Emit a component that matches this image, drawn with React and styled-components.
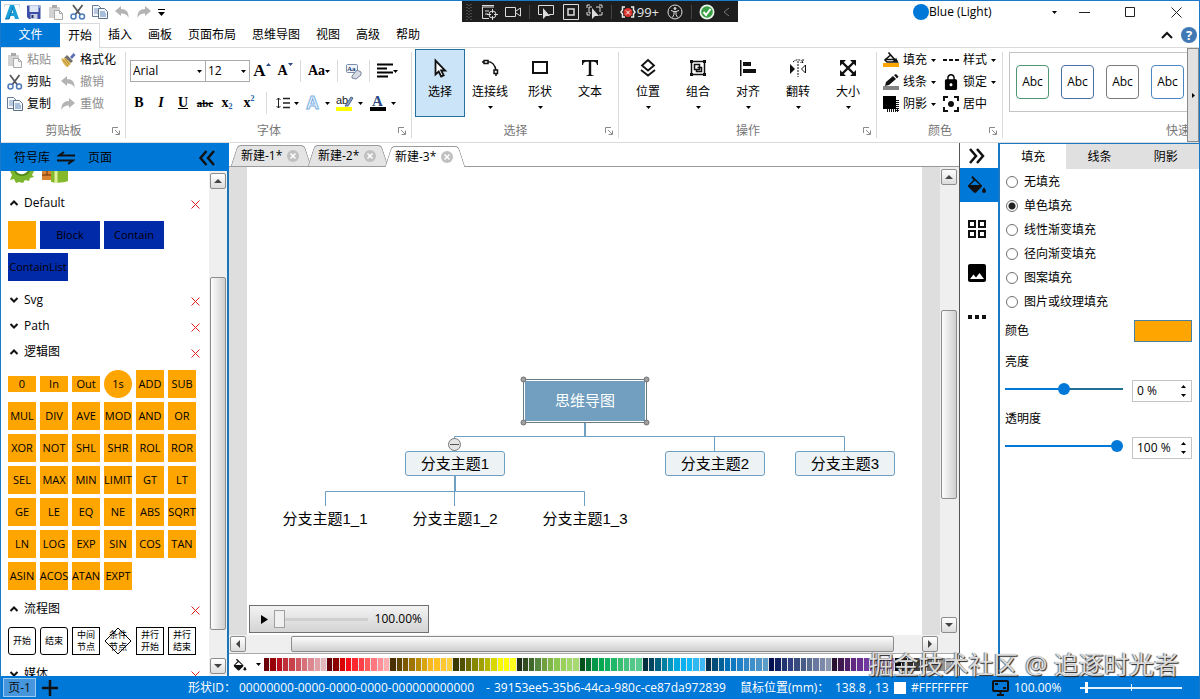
import React, { useState } from 'react'
import styled, { createGlobalStyle, css } from 'styled-components'
import { MdLock, MdImage } from 'react-icons/md'

const BLUE = '#0078d7'

const GlobalStyle = createGlobalStyle`
    * { box-sizing: border-box; }

    body {
        margin: 0;
        font-family: "Open Sans", "Noto Sans CJK SC", sans-serif;
        font-size: 12px;
        line-height: 16px;
        color: #000;
        overflow: hidden;
    }

    button, input, select {
        font: inherit;
        color: inherit;
    }

    button {
        background: none;
        border: 0;
        padding: 0;
        white-space: nowrap;
    }

    svg { display: block; flex: none; }
`

/* ---------- icons ---------- */

const Svg = ({ w = 16, h = w, box, children, ...rest }) => (
    <svg width={w} height={h} viewBox={box || `0 0 ${w} ${h}`} fill="none" aria-hidden="true" {...rest}>{children}</svg>
)

const Caret = ({ color = '#000' }) => (
    <Svg w={5} h={3}><path d="M0 0h5L2.5 3z" fill={color} /></Svg>
)

const LogoIcon = () => (
    <Svg>
        <path d="M1 15 6 1h4l5 14h-4l-1-3H6.200l-1 3zM7 9h2.200L8 5z" fill="#1ba1d8" />
        <path d="M1 15h4l4-12" stroke="#0c6fb0" />
        <path d="M.5 3V.5h15V3" stroke="#c8dcea" />
    </Svg>
)

const SaveIcon = () => (
    <Svg>
        <path d="M1 1.500h13.500V15H3L1 13z" fill="#3b4fa8" />
        <path d="M3.500 1.500h9V8h-9z" fill="#dfe6f5" />
        <path d="M4.500 10h7v5h-7z" fill="#c9cfe4" />
        <path d="M5.500 11h2v3h-2z" fill="#222c66" />
        <path d="M12 2h2v2h-2z" fill="#8ea0dd" />
    </Svg>
)

const PasteIcon = () => (
    <Svg>
        <path d="M1 3h11v11H1z" fill="#d2d2d2" />
        <path d="M4 1h5v3H4z" fill="#aaa" />
        <path d="M6.500 6.500h5l3 3v6h-8z" fill="#f7f7f7" stroke="#a9a9a9" />
        <path d="M11.500 6.500v3h3" stroke="#a9a9a9" />
    </Svg>
)

const CutIcon = () => (
    <Svg>
        <path d="M3 1l7.500 10M12.500 1 5 11" stroke="#55585c" strokeWidth="1.800" />
        <circle cx="3.500" cy="12.500" r="2.500" stroke="#4d7cb8" strokeWidth="1.500" />
        <circle cx="12" cy="12.500" r="2.500" stroke="#4d7cb8" strokeWidth="1.500" />
    </Svg>
)

const CopyIcon = () => (
    <Svg>
        <path d="M.5 1.500h6l3 3v8h-9z" fill="#f4f7fb" stroke="#6a7c93" />
        <path d="M2 5h5M2 7h5M2 9h5" stroke="#7d9cc4" />
        <path d="M6.500 4.500h6l3 3v7h-9z" fill="#f4f7fb" stroke="#5b6e88" />
        <path d="M8 8h5M8 10h6M8 12h6" stroke="#5d86bb" />
    </Svg>
)

const UndoIcon = ({ flip }) => (
    <Svg>
        <path
            transform={flip ? 'matrix(-1 0 0 1 16 0)' : undefined}
            d="M1 7l6-5v3c5 0 8 3 7.500 9-1.500-3.500-4-4.500-7.500-4.500V12z"
            fill="#b4b4b4"
        />
    </Svg>
)

const BrushIcon = () => (
    <Svg>
        <path d="M10 5l3.500-4 2 2L12 7z" fill="#5d6fb5" />
        <path d="M7 3l6 6-2 2-7-5z" fill="#6f6f6f" />
        <path d="M1 6c2 1 3 0 4.500 0L11 11c-1 2-3 3.500-4 4.500C4 13 2 10 1 6z" fill="#e2bd62" />
        <path d="M3 8l5 6M5 7l4.500 5.500" stroke="#b58a2c" />
    </Svg>
)

const LauncherIcon = () => (
    <Svg w={8}>
        <path d="M.5 6V.5H6M3 3l4 4M7.500 3.500v4h-4" stroke="#8a8a8a" />
    </Svg>
)

const ClearIcon = () => (
    <Svg w={17} h={17}>
        <rect x="1.500" y="1.500" width="11" height="8" rx="1" fill="#eef2f9" stroke="#7d8cab" />
        <text x="2" y="8" fontSize="7" fontFamily="Liberation Serif, serif" fontWeight="700" fill="#223a70">Aa</text>
        <path d="M7 13l5-6 4 2v3l-5 4-4-1z" fill="#d6dbe6" stroke="#7a8398" />
    </Svg>
)

const AlignTextIcon = () => (
    <Svg><path d="M0 1.500h16M0 5.500h10M0 9.500h16M0 13.500h11" stroke="#000" strokeWidth="2" /></Svg>
)

const SpacingIcon = () => (
    <Svg w={14} h={12}>
        <path d="M2.500 1v10M.5 3l2-2 2 2M.5 9l2 2 2-2" stroke="#222" />
        <path d="M7 1.500h7M7 6h7M7 10.500h7" stroke="#222" strokeWidth="1.500" />
    </Svg>
)

const CursorIcon = () => (
    <Svg w={20}><path d="M5.500 2.500v14l3.200-3 2.500 5 2.500-1.200-2.500-4.800h4z" stroke="#111" strokeWidth="1.800" fill="#fff" /></Svg>
)

const LinkIcon = () => (
    <Svg w={20}>
        <path d="M5 4c7-1 10 2 11 9M2 4h4" stroke="#111" strokeWidth="1.600" />
        <rect x="4" y="2.500" width="4" height="3" fill="#fff" stroke="#111" strokeWidth="1.500" />
        <rect x="14" y="12" width="3.500" height="3.500" fill="#fff" stroke="#111" strokeWidth="1.500" />
        <path d="M16 15v3" stroke="#111" strokeWidth="1.500" />
    </Svg>
)

const RectIcon = () => (
    <Svg w={20}><path d="M3 4h14v11H3z" stroke="#111" strokeWidth="2" /></Svg>
)

const TextIcon = () => (
    <Svg w={20}><path d="M2 2h16v5h-1c-.4-2.200-1.200-3.200-3.500-3.200h-2.300V16c0 1 .6 1.200 2.300 1.300V18h-7v-.7c1.700-.1 2.300-.3 2.300-1.300V3.800H6.500C4.200 3.800 3.400 4.800 3 7H2z" fill="#111" /></Svg>
)

const LayerIcon = () => (
    <Svg w={20}><path d="M10 2l6 5.500-6 5-6-5zM3 12l7 5.500 7-5.500" stroke="#111" strokeWidth="1.800" /></Svg>
)

const GroupIcon = () => (
    <Svg w={20}>
        <path d="M3.500 3.500h13v13h-13z" stroke="#111" strokeWidth="1.500" />
        <path d="M6.500 6.500h5v5h-5zM9.500 9.500h4v4h-5v-2" stroke="#111" strokeWidth="1.500" />
        <path d="M2 2h3v3H2zM15 2h3v3h-3zM2 15h3v3H2zM15 15h3v3h-3z" fill="#111" />
    </Svg>
)

const AlignIcon = () => (
    <Svg w={20}><path d="M2 2h1.500v16H2zM5 4h8v4H5zM5 11h13v4H5z" fill="#111" /></Svg>
)

const FlipIcon = () => (
    <Svg w={20}>
        <path d="M2 6v10l5-5z" fill="#111" />
        <path d="M17.500 7v8l-4-4z" stroke="#111" />
        <path d="M10 3v16" stroke="#111" strokeDasharray="2 1" />
        <path d="M5 4c3-3 7-3 10 0M15 1v3.500h-3" stroke="#111" strokeDasharray="2 1" />
    </Svg>
)

const SizeIcon = () => (
    <Svg w={20}>
        <path d="M4 4l12 12M16 4L4 16" stroke="#111" strokeWidth="2.400" />
        <path d="M2 2h6L2 8zM18 2v6l-6-6zM2 18v-6l6 6zM18 18h-6l6-6z" fill="#111" />
    </Svg>
)

const BUCKET = 'M16.56 8.94L7.62 0 6.21 1.41l2.380 2.380-5.150 5.150c-.59.59-.59 1.540 0 2.120l5.500 5.500c.29.29.68.44 1.060.44s.77-.15 1.060-.44l5.500-5.500c.59-.58.59-1.530 0-2.120z'

const BucketIcon = ({ size = 20 }) => (
    <Svg w={size} box="2 -1 20 20">
        <path fillRule="evenodd" d={`${BUCKET}M5.210 9L10 4.600 14.790 9z`} fill="#111" />
        <path d="M19 11.500s-2 2.170-2 3.500a2 2 0 0 0 4 0c0-1.330-2-3.500-2-3.500z" fill="#111" />
    </Svg>
)

const FillIcon = () => (
    <Svg>
        <path d="M5.500.5l6.500 7.500-2 2H4L2 8l5-4.500" stroke="#111" strokeWidth="1.600" />
        <path d="M2 7.500h10M13 7l1.500 3h-3z" stroke="#111" strokeWidth="1.400" />
        <path d="M0 11h16v4H0z" fill="orange" />
    </Svg>
)

const PenIcon = () => (
    <Svg>
        <path d="M2 12l1-4 7-6 3 3-7 6zM11 1l2-1 2.500 2.500-1.500 2z" fill="#111" />
        <path d="M0 12h16v4H0z" fill="#848484" />
    </Svg>
)

const ShadowIcon = () => (
    <Svg>
        <path d="M4 14.500h12M14.500 4v12" stroke="#111" strokeWidth="3" strokeDasharray="1 1" />
        <path d="M0 0h13v13H0z" fill="#000" />
    </Svg>
)

const DashIcon = () => (
    <Svg><path d="M0 8h4M6 8h4M12 8h4" stroke="#111" strokeWidth="2" /></Svg>
)

const CenterIcon = () => (
    <Svg>
        <path d="M1 5V1h4M11 1h4v4M15 11v4h-4M5 15H1v-4" stroke="#111" strokeWidth="2" />
        <circle cx="8" cy="8" r="3" fill="#111" />
    </Svg>
)

const Chevron = ({ up }) => (
    <Svg w={10} h={8}><path d={up ? 'M1.500 6L5 2.500 8.500 6' : 'M1.500 2L5 5.500 8.500 2'} stroke="#111" strokeWidth="2" /></Svg>
)

const CrossIcon = () => (
    <Svg w={9}><path d="M.5.5l8 8M8.500.5l-8 8" stroke="#e02020" /></Svg>
)

const DoubleChevron = ({ right }) => (
    <Svg w={18} h={18}>
        <path d={right ? 'M2 2l6 7-6 7M9 2l6 7-6 7' : 'M8.500 2l-6 7 6 7M16 2l-6 7 6 7'} stroke="#111" strokeWidth="2.500" />
    </Svg>
)

const SwapIcon = () => (
    <Svg w={18} h={14}><path d="M18 4.500H2L7 1M0 9.500h16L11 13" stroke="#111" strokeWidth="2" /></Svg>
)

const GridIcon = () => (
    <Svg w={20}><path d="M2 2h6v6H2zM12 2h6v6h-6zM2 12h6v6H2zM12 12h6v6h-6z" stroke="#111" strokeWidth="2" /></Svg>
)

const DotsIcon = () => (
    <Svg w={20}><path d="M1 8h4v4H1zM8 8h4v4H8zM15 8h4v4h-4z" fill="#111" /></Svg>
)

const MonitorIcon = () => (
    <Svg w={17} h={16}>
        <rect x="1" y="1" width="15" height="10" rx="1" stroke="#111" strokeWidth="2" />
        <path d="M4 5V4h2M13 7v1h-2M5 15h7M8.500 11v4" stroke="#111" strokeWidth="2" />
    </Svg>
)

const ScrollArrow = ({ d }) => <Svg w={8}><path d={d} fill="#444" /></Svg>

/* ---------- window frame ---------- */

const Window = styled.div`
    height: 100vh;
    min-height: 560px;
    display: flex;
    flex-direction: column;
    border: 1px solid #1979ca;
    border-bottom: 0;
    background: #fff;
    position: relative;
    overflow: hidden;
`

const TitleBar = styled.header`
    display: flex;
    align-items: center;
    height: 22px;
    padding-left: 3px;
`

const QuickTools = styled.div`
    display: flex;
    align-items: center;
    gap: 6px;
    flex: 1;
`

const ThemePicker = styled.button`
    display: flex;
    align-items: center;
    width: 144px;
    font-size: 12px;

    i {
        width: 16px;
        height: 16px;
        border-radius: 50%;
        background: ${BLUE};
    }

    svg { margin-left: auto; }
`

const WindowButton = styled.button`
    display: flex;
    justify-content: center;
    width: 46px;
    color: #222;
`

const WindowButtons = styled.div`
    display: flex;
    margin-left: 4px;
`

const Recorder = styled.div`
    position: absolute;
    top: 0;
    left: 50%;
    transform: translateX(-50%);
    display: flex;
    align-items: center;
    justify-content: space-between;
    width: 276px;
    height: 21px;
    padding: 0 8px 0 4px;
    background: #1e1e1e;
    color: #e6e6e6;
    font-size: 13px;

    span { display: flex; align-items: center; gap: 1px; }
    i { width: 1px; height: 14px; background: #444; }
`

/* ---------- ribbon ---------- */

const TabRow = styled.nav`
    display: flex;
    height: 24px;
`

const RibbonTab = styled.button`
    padding: 0 8px;
    position: relative;

    ${p => p.$active && css`
        background: #fff;
        border: solid #dadada;
        border-width: 1px 1px 0 0;
        padding: 0 7px 0 8px;
        margin-bottom: -1px;
    `}

    ${p => p.$file && css`
        width: 59px;
        background: ${BLUE};
        color: #fff;
    `}
`

const TabRowEnd = styled.div`
    display: flex;
    align-items: center;
    gap: 8px;
    margin-left: auto;
    padding-right: 2px;

    b {
        width: 16px;
        height: 16px;
        border-radius: 50%;
        background: #3f78b5;
        color: #fff;
        text-align: center;
        font-size: 13px;
    }
`

const Ribbon = styled.div`
    display: flex;
    height: 96px;
    border-top: 1px solid #dadada;
    border-bottom: 1px solid #dadada;
`

const Group = styled.section`
    display: flex;
    flex-direction: column;
    width: ${p => p.$width}px;
    flex: none;
    position: relative;

    &::after {
        content: "";
        position: absolute;
        right: 0;
        top: 4px;
        bottom: 4px;
        border-right: 1px solid #dadada;
    }
`

const GroupBody = styled.div`
    height: 73px;
    padding: ${p => p.$pad || '1px 4px 0'};
`

const GroupFoot = styled.div`
    display: flex;
    align-items: center;
    color: #777;
    height: 20px;
    padding: 0 6px 0 14px;

    span { flex: 1; text-align: center; }
`

const SmallGrid = styled.div`
    display: grid;
    grid-template-columns: ${p => p.$cols};
    grid-auto-rows: 22px;
`

const SmallButton = styled.button`
    display: flex;
    align-items: center;
    gap: 4px;
    color: ${p => p.$off ? '#8e8e8e' : '#000'};
`

const BigButton = styled.button`
    display: flex;
    flex-direction: column;
    align-items: center;
    width: 50px;
    height: 68px;
    padding-top: 8px;
    border: 1px solid ${p => p.$active ? '#26719c' : 'transparent'};
    background: ${p => p.$active ? '#cce4f7' : 'none'};

    span { margin: 6px 0; }
`

const BigRow = styled.div`
    display: flex;
`

const FontRows = styled.div`
    display: grid;
    gap: 10px;
`

const FontRow = styled.div`
    display: flex;
    align-items: center;
    gap: ${p => p.$gap}px;
    height: 22px;
    padding-left: ${p => p.$indent || 0}px;
    font-family: "Liberation Serif", serif;
    font-size: 14px;
    font-weight: 700;

    button { display: flex; align-items: center; justify-content: center; gap: ${p => p.$tight ? 0 : 4}px; }
    sub, sup { font-size: 8px; color: #1d5fa8; line-height: 8px; }
    sub { align-self: flex-end; }
    sup { align-self: flex-start; }
`

const Sep = styled.i`
    width: 1px;
    height: 22px;
    margin: 0 ${p => p.$space || 0}px;
    background: #dadada;
`

const Pickers = styled.div`
    display: flex;
    margin-right: -3px;
`

const SelectBox = styled.label`
    display: flex;
    align-items: center;
    width: ${p => p.$width}px;
    height: 22px;
    border: 1px solid #ababab;
    padding: 0 3px 0 2px;
    font-family: "Open Sans", sans-serif;
    font-size: 12px;
    font-weight: 400;

    & + & { margin-left: -1px; }

    select {
        appearance: none;
        border: 0;
        background: none;
        flex: 1;
        min-width: 0;
        padding: 0;
    }
`

const FormatButton = styled.button`
    width: 16px;
    font-style: ${p => p.$italic ? 'italic' : 'normal'};
    text-decoration: ${p => p.$line || 'none'};
    font-size: ${p => p.$size || 14}px;

    && { gap: 0; }
    svg { align-self: flex-start; }
`

const StyleGroup = styled.section`
    flex: 1;
    min-width: 0;
    overflow: hidden;
    padding: 4px 0 0 6px;
`

const StyleStrip = styled.div`
    display: flex;
    gap: 12px;
    width: 420px;
    height: 60px;
    padding: 12px 6px 0;
    border: 1px solid #c4c4c4;

    button {
        width: 33px;
        height: 34px;
        border: 1px solid;
        border-radius: 4px;
        background: #fff;
    }
    span { color: #000; }
`

const StyleCaption = styled.div`
    width: 420px;
    padding: 11px 0 0 157px;
    color: #777;
    white-space: nowrap;
`

const RibbonScroll = styled.button`
    display: flex;
    align-items: center;
    justify-content: center;
    width: 12px;
    border: 1px solid #8a8a8a;
    background: #e1e1e1;
`

/* ---------- middle ---------- */

const Main = styled.main`
    display: flex;
    flex: 1;
    min-height: 0;
`

const Sidebar = styled.aside`
    display: flex;
    flex-direction: column;
    flex: none;
    width: 228px;
    border-right: 2px solid #1a75bb;
`

const SideHead = styled.div`
    display: flex;
    align-items: center;
    flex: none;
    height: 28px;
    padding: 1px 13px 0 13px;
    margin-right: -2px;
    gap: 7px;
    background: ${BLUE};

    button + svg + button { margin-left: 6px; }
    button:last-child { margin-left: auto; }
`

const SideBody = styled.div`
    display: flex;
    flex: 1;
    min-height: 0;
`

const Library = styled.div`
    flex: 1;
    overflow: hidden;
`

const CutOffRow = styled.div`
    display: flex;
    gap: 8px;
    height: 19px;
    padding-left: 9px;
`

const LibHead = styled.div`
    display: flex;
    align-items: center;
    height: 26px;
    padding: 0 9px 0 8px;
    gap: 5px;

    button:last-child { margin-left: auto; padding-top: 2px; }
`

const Shapes = styled.div`
    display: flex;
    flex-wrap: wrap;
    align-items: center;
    gap: 4px;
    padding: 5px 12px 6px 7px;
`

const Shape = styled.button`
    display: flex;
    align-items: center;
    justify-content: center;
    width: ${p => p.$wide ? 60 : 28}px;
    height: ${p => p.$short ? 16 : 28}px;
    border-radius: ${p => p.$round ? '50%' : 0};
    background: ${p => p.$wide ? '#002aa8' : 'orange'};
    font-size: 11px;
`

const FlowShape = styled.button`
    display: flex;
    align-items: center;
    justify-content: center;
    position: relative;
    width: 28px;
    height: 28px;
    border: ${p => p.$diamond ? 0 : '1px solid #000'};
    border-radius: ${p => p.$round ? 3 : 0}px;
    font-size: 9px;
    line-height: 12px;
    white-space: pre-line;

    svg { position: absolute; left: 0; top: 0; }
`

const Track = styled.div`
    display: flex;
    flex-direction: ${p => p.$row ? 'row' : 'column'};
    flex: none;
    background: #efefef;
    ${p => p.$row ? 'height: 18px; padding: 1px;' : 'width: 18px; padding: 2px 1px;'}
    ${p => p.$inset && 'width: 19px; padding-right: 2px;'}
`

const TrackButton = styled.button`
    display: flex;
    align-items: center;
    justify-content: center;
    flex: none;
    width: 16px;
    height: 16px;
    border: 1px solid #8c8c8c;
    border-radius: 2px;
    background: linear-gradient(#fff, #dcdcdc);
`

const Thumb = styled.div`
    flex: ${p => p.$size};
    border: 1px solid #8c8c8c;
    border-radius: 2px;
    background: linear-gradient(${p => p.$row ? '180deg' : '90deg'}, #fcfcfc, #cfcfcf);
`

const Space = styled.div`
    flex: ${p => p.$size};
`

const Corner = styled.div`
    width: 20px;
`

const Editor = styled.div`
    display: flex;
    flex-direction: column;
    flex: 1;
    min-width: 0;
    border-right: 1px solid #555;
`

const DocTabs = styled.div`
    display: flex;
    align-items: flex-end;
    flex: none;
    height: 24px;
    padding-left: 3px;
    border-bottom: 1px solid #9a9a9a;
`

const DocTab = styled.div`
    display: flex;
    align-items: center;
    gap: 5px;
    position: relative;
    z-index: ${p => p.$active ? 2 : 1};
    width: 77px;
    height: 21px;
    margin-bottom: ${p => p.$active ? -1 : 0}px;
    padding-left: 9px;

    &::before, &::after {
        content: "";
        position: absolute;
        z-index: -1;
        top: 0;
        bottom: 0;
        background: ${p => p.$active ? '#fff' : '#e4e4e4'};
        border-top: 1px solid #9a9a9a;
    }
    &::before {
        left: 2px;
        right: 30px;
        border-left: 1px solid #9a9a9a;
        border-radius: 4px 0 0 0;
        transform: skewX(-18deg);
    }
    &::after {
        left: 30px;
        right: 1px;
        border-right: 1px solid #9a9a9a;
        border-radius: 0 4px 0 0;
        transform: skewX(18deg);
    }
`

const Viewport = styled.div`
    display: flex;
    flex: 1;
    min-height: 0;
    background: #dedede;
`

const Page = styled.div`
    flex: 1;
    margin: 0 18px;
    background: #fff;
    position: relative;
    overflow: hidden;
`

const Links = styled.svg`
    position: absolute;
    left: 0;
    top: 0;
`

const Node = styled.div`
    position: absolute;
    left: ${p => p.$x}px;
    top: ${p => p.$y}px;
    display: flex;
    align-items: center;
    justify-content: center;
    width: 100px;
    height: 25px;
    font: 15px/20px "Liberation Sans", "Noto Sans CJK SC", sans-serif;
    white-space: nowrap;

    ${p => p.$kind === 'branch' && css`
        border: 1px solid #6f9fc2;
        border-radius: 3px;
        background: #edf2f5;
    `}

    ${p => p.$kind === 'root' && css`
        width: 124px;
        height: 44px;
        border: 1px solid #6e7a80;
        outline: 1px solid #fff;
        outline-offset: -2px;
        background: #729fc0;
        color: #fff;
    `}
`

const Player = styled.div`
    position: absolute;
    left: 2px;
    bottom: 2px;
    display: flex;
    align-items: center;
    width: 180px;
    height: 28px;
    padding: 0 6px 0 11px;
    border: 1px solid #707070;
    background: linear-gradient(#f3f3f3, #d4d4d4);

    button { margin-right: 6px; }
    output { margin-left: auto; }

    input {
        appearance: none;
        width: 94px;
        height: 20px;
        margin: 0;
        background: linear-gradient(#d0d0d0, #d0d0d0) center / 100% 3px no-repeat;
    }
    input::-webkit-slider-thumb {
        appearance: none;
        width: 11px;
        height: 18px;
        border: 1px solid #a0a0a0;
        background: #f0f0f0;
    }
`

const PaletteBar = styled.div`
    display: flex;
    align-items: center;
    flex: none;
    height: 23px;
    padding: 0 0 1px 2px;
    border-top: 1px solid #aaa;

    > button { display: flex; align-items: center; gap: 9px; width: 33px; padding-left: 2px; }
`

const Swatches = styled.div`
    display: flex;
    flex: 1;
    height: 13px;
`

const Swatch = styled.button`
    flex: 1;
    background: ${p => p.$color};
    border-right: 1px solid #e4e4e4;
`

const Rail = styled.nav`
    display: flex;
    flex-direction: column;
    flex: none;
    width: 40px;
    border-right: 2px solid #1a79c4;
`

const RailButton = styled.button`
    display: flex;
    align-items: center;
    justify-content: center;
    height: ${p => p.$height}px;
    padding-right: 4px;
    background: ${p => p.$active ? BLUE : 'none'};
    ${p => p.$active && 'margin-bottom: 5px;'}
`

/* ---------- fill panel ---------- */

const Panel = styled.aside`
    flex: none;
    width: 199px;
    border-top: 1px solid #1a79c4;
`

const PanelTabs = styled.div`
    display: grid;
    grid-template-columns: repeat(3, 1fr);
    height: 25px;
`

const PanelTab = styled.button`
    background: ${p => p.$active ? '#fff' : '#e0e0e0'};
`

const RadioList = styled.div`
    display: grid;
    grid-auto-rows: 24px;
    padding: 1px 0 0 6px;
`

const RadioLabel = styled.label`
    display: flex;
    align-items: center;
    gap: 6px;

    input {
        appearance: none;
        width: 12px;
        height: 12px;
        margin: 0;
        border: 1px solid #707070;
        border-radius: 50%;
    }
    input:checked { background: radial-gradient(circle, #222 3px, #fff 4px); }
`

const Field = styled.div`
    display: flex;
    align-items: center;
    justify-content: space-between;
    height: ${p => p.$height}px;
    padding: 0 7px 0 5px;
`

const ColorButton = styled.button`
    width: 58px;
    height: 22px;
    border: 1px solid #4a80a0;
    background: orange;
`

const Slider = styled.input`
    appearance: none;
    width: 118px;
    height: 12px;
    margin: 0 0 4px;
    background: linear-gradient(90deg, ${BLUE} 50%, ${p => p.value < 100 ? '#1f6f96' : BLUE} 50%) center / 100% 2px no-repeat;

    &::-webkit-slider-thumb {
        appearance: none;
        width: 12px;
        height: 12px;
        border-radius: 50%;
        background: ${BLUE};
    }
`

const Spin = styled.div`
    display: flex;
    align-items: center;
    width: 60px;
    height: 22px;
    border: 1px solid #c4c4c4;
    padding: 0 5px 0 4px;

    input { flex: 1; min-width: 0; border: 0; padding: 0; }
    div { display: grid; gap: 6px; }
    button { display: block; height: 3px; }
    button:first-child { transform: rotate(180deg); }
`

/* ---------- status bar ---------- */

const StatusBar = styled.footer`
    display: flex;
    align-items: center;
    flex: none;
    height: 23px;
    padding-left: 2px;
    background: ${BLUE};
    color: #fff;
    white-space: nowrap;
`

const PageTabs = styled.div`
    display: flex;
    align-items: center;
    gap: 6px;
    width: 185px;
    flex: none;
    color: #111;

    button:first-child {
        width: 33px;
        height: 19px;
        border: 1px solid #9ccaf0;
        background: #4596dc;
    }
`

const Info = styled.div`
    display: flex;
    flex: 1;
    min-width: 0;
    overflow: hidden;

    span { flex: none; }
`

const InfoPart = styled.span`
    width: ${p => p.$width}px;
`

const StatusEnd = styled.div`
    display: flex;
    align-items: center;
    width: 305px;
    flex: none;

    > i { width: 12px; height: 12px; margin-right: 5px; background: #fff; }
    > svg { margin-right: 5px; }
    > span { width: 81px; }
    output { width: 66px; }

    input {
        appearance: none;
        width: 102px;
        height: 12px;
        margin: 0;
        background:
            linear-gradient(#e8f2fb, #e8f2fb) center / 100% 2px no-repeat,
            linear-gradient(#e8f2fb, #e8f2fb) center / 1px 7px no-repeat;
    }
    input::-webkit-slider-thumb {
        appearance: none;
        width: 3px;
        height: 11px;
        background: #fff;
    }
`

const Watermark = styled.div`
    position: absolute;
    right: 20px;
    bottom: 19px;
    font: 25px/32px "Open Sans", "Noto Sans CJK SC", sans-serif;
    color: #dcdcdc;
    text-shadow: 1px 1px 1px #222, -1px 0 1px #777;
    white-space: nowrap;
    pointer-events: none;
`

/* ---------- data ---------- */

const MENU = ['开始', '插入', '画板', '页面布局', '思维导图', '视图', '高级', '帮助']

const LOGIC = [
    '0', 'In', 'Out', '1s', 'ADD', 'SUB',
    'MUL', 'DIV', 'AVE', 'MOD', 'AND', 'OR',
    'XOR', 'NOT', 'SHL', 'SHR', 'ROL', 'ROR',
    'SEL', 'MAX', 'MIN', 'LIMIT', 'GT', 'LT',
    'GE', 'LE', 'EQ', 'NE', 'ABS', 'SQRT',
    'LN', 'LOG', 'EXP', 'SIN', 'COS', 'TAN',
    'ASIN', 'ACOS', 'ATAN', 'EXPT'
]

const FLOW = ['开始', '结束', '中间\n节点', '条件\n节点', '并行\n开始', '并行\n结束']

const FILLS = ['无填充', '单色填充', '线性渐变填充', '径向渐变填充', '图案填充', '图片或纹理填充']

const PALETTE = [
    '6b0008 980008 b8101c c0303a c8404a d05862 d87078 dc8890 e0a0a6 e4b8bc',
    '680008 8c0000 d80000 f80c18 ff2830 ff4048 ff5c5c ff7880 ff9098 ffaaac',
    '4a3000 604400 7c5800 a07400 bc8c00 d8a410 f8b820 ffc020 ffc830 ffd040',
    '383800 505000 6c6c00 888800 a0a000 b8b800 d8d800 f8f800 ffff00 ffff20',
    '203018 304c20 406828 588840 70a040 80b848 8cc850 98d058 a0d868 a8d870',
    '00501c 007030 009848 00a850 10b060 20b868 38c070 44c480 50c888 58cc90',
    '003040 004460 006080 0080a0 0098c0 00a8e0 08b0f0 10b8f8 30b8f0 40b8f8',
    '003050 004c78 006098 0070b8 1078c0 2080c8 3088c8 3c90cc 4c94c8 5c9cc8',
    '001050 102060 203470 304080 384c80 485c88 586c90 6878a0 7c88a8 8c98b0',
    '281030 401850 502068 602880 683090 7038a0 8048a8 9060b8 a078c0 b090cc',
    '000000 1c1c1c 303030 444444 585858 6c6c6c 808080 949494 a8a8a8 bcbcbc'
].join(' ').split(' ')

const NODES = [
    { kind: 'root', x: 276, y: 212, text: '思维导图' },
    { kind: 'branch', x: 158, y: 284, text: '分支主题1' },
    { kind: 'branch', x: 418, y: 284, text: '分支主题2' },
    { kind: 'branch', x: 548, y: 284, text: '分支主题3' },
    { kind: 'leaf', x: 28, y: 339, text: '分支主题1_1' },
    { kind: 'leaf', x: 158, y: 339, text: '分支主题1_2' },
    { kind: 'leaf', x: 288, y: 339, text: '分支主题1_3' }
]

/* ---------- parts ---------- */

const VScroll = ({ before, size, after, inset }) => (
    <Track $inset={inset}>
        <TrackButton aria-label="上"><ScrollArrow d="M0 6l4-4 4 4z" /></TrackButton>
        <Space $size={before} />
        <Thumb $size={size} />
        <Space $size={after} />
        <TrackButton aria-label="下"><ScrollArrow d="M0 2l4 4 4-4z" /></TrackButton>
    </Track>
)

const Foot = ({ children }) => (
    <GroupFoot><span>{children}</span><LauncherIcon /></GroupFoot>
)

const Big = ({ icon, label, active, menu }) => (
    <BigButton $active={active}>
        {icon}
        <span>{label}</span>
        {menu && <Caret />}
    </BigButton>
)

const Small = ({ icon, label, off, menu }) => (
    <SmallButton $off={off}>{icon}{label}{menu && <Caret />}</SmallButton>
)

const LibraryHead = ({ title, open }) => (
    <LibHead>
        <Chevron up={open} />
        {title}
        <button aria-label={`关闭${title}`}><CrossIcon /></button>
    </LibHead>
)

const RecorderBar = () => (
    <Recorder>
        <Svg w={7} h={16}><path d="M1 0v16M5 0v16M3 1v15" stroke="#777" strokeDasharray="1 2" /></Svg>
        <Svg w={17} h={16} stroke="#ddd">
            <path d="M1 3h12M1 1.500h12M8 14.500H1.500V3M4 7h4M4 10h3" />
            <circle cx="11.500" cy="10.500" r="3.500" /><path d="M11.500 5v4M11.500 12v4M6 10.500h4M13 10.500h4" />
        </Svg>
        <Svg stroke="#ddd"><path d="M.5 3.500h10v9H.5zM11 7l4.500-3v8L11 9" /></Svg>
        <i />
        <Svg w={17} h={16}><path d="M4 10.500H.500v-9h15v9H11" stroke="#ddd" /><path d="M5 4v11l3-3h4z" fill="#ddd" /></Svg>
        <Svg stroke="#ddd"><path d="M.5.5h15v15H.5z" /><path d="M5 5h6v6H5z" strokeWidth="1.500" /></Svg>
        <Svg w={17} h={16}>
            <path d="M1 4V1h3M13 1h3v3M16 8v3h-3M4 11H1V8M6 3H3v6h2M10 3h4v5" stroke="#ddd" />
            <path d="M6 4v11l3-3h4z" fill="#ddd" />
        </Svg>
        <i />
        <span>
            <Svg>
                <path d="M5 3H2.500v3L1 8l1.500 2v3H5M11 3h2.500v3L15 8l-1.500 2v3H11" stroke="#eee" strokeWidth="1.500" />
                <circle cx="8" cy="8.500" r="4.500" fill="#d8322c" />
                <path d="M6 6.500l4 4M10 6.500l-4 4" stroke="#fff" />
            </Svg>
            99+
        </span>
        <Svg stroke="#ddd">
            <circle cx="8" cy="8" r="7" /><circle cx="8" cy="4.500" r="1" fill="#ddd" />
            <path d="M4 6.500l3 1h2l3-1M7 7.500v3l-1.500 3M9 7.500v3l1.500 3" />
        </Svg>
        <i />
        <Svg>
            <circle cx="8" cy="8" r="7.500" fill="#e9f5e9" />
            <circle cx="8" cy="8" r="5.800" fill="#3ba045" />
            <path d="M4.500 8l2.500 3 4.500-6" stroke="#fff" strokeWidth="2" />
        </Svg>
        <Svg w={7} h={10}><path d="M6 1L1 5l5 4" stroke="#777" /></Svg>
    </Recorder>
)

const FontPickers = () => (
    <Pickers>
        <SelectBox $width={76}>
            <select aria-label="字体"><option>Arial</option></select>
            <Caret />
        </SelectBox>
        <SelectBox $width={45}>
            <select aria-label="字号"><option>12</option></select>
            <Caret />
        </SelectBox>
    </Pickers>
)

const FontGroup = () => (
    <Group $width={286}>
        <GroupBody $pad="12px 4px 0">
            <FontRows>
                <FontRow $gap={7} $tight>
                    <FontPickers />
                    <FormatButton $size={17} aria-label="增大字号">
                        A<Svg w={5} h={3}><path d="M0 3h5L2.500 0z" fill="#2b4a86" /></Svg>
                    </FormatButton>
                    <FormatButton $size={14} aria-label="减小字号">A<Caret color="#2b4a86" /></FormatButton>
                    <Sep />
                    <button>Aa<Caret /></button>
                    <Sep />
                    <button aria-label="清除格式"><ClearIcon /></button>
                    <Sep />
                    <button aria-label="对齐方式"><AlignTextIcon /><Caret /></button>
                </FontRow>
                <FontRow $gap={6} $indent={1}>
                    <FormatButton>B</FormatButton>
                    <FormatButton $italic>I</FormatButton>
                    <FormatButton $line="underline">U</FormatButton>
                    <FormatButton $line="line-through" $size={11}>abc</FormatButton>
                    <FormatButton>x<sub>2</sub></FormatButton>
                    <FormatButton>x<sup>2</sup></FormatButton>
                    <Sep $space={3} />
                    <button aria-label="行距"><SpacingIcon /><Caret /></button>
                    <button aria-label="文字效果">
                        <Svg w={16} h={18}>
                            <text x="1" y="15" fontSize="18" fontFamily="Liberation Sans, sans-serif" fill="#eef6fd" stroke="#7db2e4">A</text>
                        </Svg>
                        <Caret />
                    </button>
                    <button aria-label="突出显示">
                        <Svg w={18} h={18}>
                            <text x="0" y="10" fontSize="11" fontFamily="Liberation Sans, sans-serif" fontWeight="400" fill="#222">ab</text>
                            <path d="M9 12l6-9 2 1-5 8z" fill="#8aa3c8" stroke="#4a638c" />
                            <path d="M0 13h16v4H0z" fill="#ff0" />
                        </Svg>
                        <Caret />
                    </button>
                    <button aria-label="字体颜色">
                        <Svg w={18} h={18}>
                            <text x="3" y="12" fontSize="15" fontFamily="Liberation Serif, serif" fontWeight="700" fill="#2b4a86">A</text>
                            <path d="M1 13h16v4H1z" fill="#000" />
                        </Svg>
                        <Caret />
                    </button>
                </FontRow>
            </FontRows>
        </GroupBody>
        <Foot>字体</Foot>
    </Group>
)

const RibbonBar = () => (
    <Ribbon>
        <Group $width={125}>
            <GroupBody $pad="1px 6px 0">
                <SmallGrid $cols="53px 1fr">
                    <Small icon={<PasteIcon />} label="粘贴" off />
                    <Small icon={<BrushIcon />} label="格式化" />
                    <Small icon={<CutIcon />} label="剪贴" />
                    <Small icon={<UndoIcon />} label="撤销" off />
                    <Small icon={<CopyIcon />} label="复制" />
                    <Small icon={<UndoIcon flip />} label="重做" off />
                </SmallGrid>
            </GroupBody>
            <Foot>剪贴板</Foot>
        </Group>
        <FontGroup />
        <Group $width={207}>
            <GroupBody $pad="1px 3px 0">
                <BigRow>
                    <Big icon={<CursorIcon />} label="选择" active />
                    <Big icon={<LinkIcon />} label="连接线" menu />
                    <Big icon={<RectIcon />} label="形状" menu />
                    <Big icon={<TextIcon />} label="文本" />
                </BigRow>
            </GroupBody>
            <Foot>选择</Foot>
        </Group>
        <Group $width={258}>
            <GroupBody>
                <BigRow>
                    <Big icon={<LayerIcon />} label="位置" menu />
                    <Big icon={<GroupIcon />} label="组合" menu />
                    <Big icon={<AlignIcon />} label="对齐" menu />
                    <Big icon={<FlipIcon />} label="翻转" menu />
                    <Big icon={<SizeIcon />} label="大小" menu />
                </BigRow>
            </GroupBody>
            <Foot>操作</Foot>
        </Group>
        <Group $width={126}>
            <GroupBody $pad="1px 6px 0">
                <SmallGrid $cols="60px 1fr">
                    <Small icon={<FillIcon />} label="填充" menu />
                    <Small icon={<DashIcon />} label="样式" menu />
                    <Small icon={<PenIcon />} label="线条" menu />
                    <Small icon={<MdLock size={16} viewBox="2 1 20 21" />} label="锁定" menu />
                    <Small icon={<ShadowIcon />} label="阴影" menu />
                    <Small icon={<CenterIcon />} label="居中" />
                </SmallGrid>
            </GroupBody>
            <Foot>颜色</Foot>
        </Group>
        <StyleGroup>
            <StyleStrip>
                {['#4f9474', '#4a6fa5', '#7a7a7a', '#4a86c0'].map((color, index) => (
                    <button key={index} style={{ borderColor: color }}><span>Abc</span></button>
                ))}
            </StyleStrip>
            <StyleCaption>快速样式</StyleCaption>
        </StyleGroup>
        <RibbonScroll aria-label="更多"><Svg w={3} h={5}><path d="M0 0l3 2.500L0 5z" fill="#000" /></Svg></RibbonScroll>
    </Ribbon>
)

const SymbolLibrary = () => (
    <Sidebar>
        <SideHead>
            <button>符号库</button>
            <SwapIcon />
            <button>页面</button>
            <button aria-label="收起"><DoubleChevron /></button>
        </SideHead>
        <SideBody>
            <Library>
                <CutOffRow>
                    <Svg w={24} h={13}>
                        <path d="M0 0h24l-2 4 2 2-4 1-1 3-4-1-2 3-4-1-3 1-2-4-4 1 2-5z" fill="#7cb52e" />
                        <path d="M5 0c2 5 10 6 14 0" fill="#fff" stroke="#4f8a1a" strokeWidth="2" />
                    </Svg>
                    <Svg w={27} h={13}>
                        <path d="M0 0h12v9H0z" fill="#dd8430" /><path d="M0 4h9M5 0v4" stroke="#6b2f0c" />
                        <path d="M9 0h17v10c-4 2-13 2-17 1z" fill="#86b82c" /><path d="M14 0v12" stroke="#e1ef9c" strokeWidth="3" />
                    </Svg>
                </CutOffRow>
                <LibraryHead title="Default" open />
                <Shapes>
                    <Shape aria-label="矩形" />
                    <Shape $wide>Block</Shape>
                    <Shape $wide>Contain</Shape>
                    <Shape $wide>ContainList</Shape>
                </Shapes>
                <LibraryHead title="Svg" />
                <LibraryHead title="Path" />
                <LibraryHead title="逻辑图" open />
                <Shapes>
                    {LOGIC.map((name, index) => (
                        <Shape key={name} $short={index < 3} $round={name === '1s'}>{name}</Shape>
                    ))}
                </Shapes>
                <LibraryHead title="流程图" open />
                <Shapes>
                    {FLOW.map((name, index) => (
                        <FlowShape key={name} $round={index < 2} $diamond={index === 3}>
                            {index === 3 && <Svg w={28}><path d="M14 1l13 13-13 13L1 14z" stroke="#000" /></Svg>}
                            {name}
                        </FlowShape>
                    ))}
                </Shapes>
                <LibraryHead title="媒体" />
            </Library>
            <VScroll before={88} size={353} after={28} />
        </SideBody>
    </Sidebar>
)

const MindMap = () => (
    <Page>
        <Links width="675" height="467" fill="none" stroke="#6f9fc2">
            <path d="M338 256v13" strokeWidth="2" />
            <path d="M207.500 284v-14.500h390V284M467.500 269.500V284" />
            <path d="M208 309v15" strokeWidth="2" />
            <path d="M78.500 339v-14.500h259V339M207.500 324.500V339" />
        </Links>
        {NODES.map(node => (
            <Node key={node.text} $kind={node.kind} $x={node.x} $y={node.y}>{node.text}</Node>
        ))}
        <Links width="675" height="467" fill="none">
            <g fill="#a0a0a0" stroke="#707070">
                <circle cx="276.500" cy="212.500" r="2.500" />
                <circle cx="399.500" cy="212.500" r="2.500" />
                <circle cx="276.500" cy="255.500" r="2.500" />
                <circle cx="399.500" cy="255.500" r="2.500" />
            </g>
            <circle cx="207.500" cy="277.500" r="6" fill="#e4e4e4" stroke="#777" />
            <path d="M203 277.500h9" stroke="#555" />
        </Links>
        <Player>
            <button aria-label="播放"><Svg w={7} h={9}><path d="M0 0l7 4.500L0 9z" fill="#000" /></Svg></button>
            <input type="range" aria-label="进度" defaultValue={0} />
            <output>100.00%</output>
        </Player>
    </Page>
)

const DocumentArea = () => (
    <Editor>
        <DocTabs>
            {['新建-1*', '新建-2*', '新建-3*'].map((name, index) => (
                <DocTab key={name} $active={index === 2}>
                    {name}
                    <button aria-label="关闭">
                        <Svg w={12}>
                            <circle cx="6" cy="6" r="6" fill="#c0c0c0" />
                            <path d="M3.500 3.500l5 5M8.500 3.500l-5 5" stroke="#fff" strokeWidth="1.500" />
                        </Svg>
                    </button>
                </DocTab>
            ))}
        </DocTabs>
        <Viewport>
            <MindMap />
            <VScroll before={126} size={188} after={119} inset />
        </Viewport>
        <Track $row>
            <TrackButton aria-label="左"><ScrollArrow d="M6 0L2 4l4 4z" /></TrackButton>
            <Space $size={45} />
            <Thumb $row $size={604} />
            <Space $size={28} />
            <TrackButton aria-label="右"><ScrollArrow d="M2 0l4 4-4 4z" /></TrackButton>
            <Corner />
        </Track>
        <PaletteBar>
            <button aria-label="填充颜色"><BucketIcon size={14} /><Caret /></button>
            <Swatches>
                {PALETTE.map((color, index) => <Swatch key={index} $color={`#${color}`} aria-label={`#${color}`} />)}
            </Swatches>
        </PaletteBar>
    </Editor>
)

const Percent = ({ label, value, text }) => (
    <>
        <Field as="label" htmlFor={label} $height={28}>{label}</Field>
        <Field $height={29}>
            <Slider id={label} type="range" value={value} readOnly />
            <Spin>
                <input aria-label={`${label}值`} defaultValue={text} />
                <div>
                    <button aria-label="增加"><Caret /></button>
                    <button aria-label="减少"><Caret /></button>
                </div>
            </Spin>
        </Field>
    </>
)

const FillPanel = () => {
    const [fill, setFill] = useState('单色填充')

    return (
        <Panel>
            <PanelTabs>
                <PanelTab $active>填充</PanelTab>
                <PanelTab>线条</PanelTab>
                <PanelTab>阴影</PanelTab>
            </PanelTabs>
            <RadioList>
                {FILLS.map(name => (
                    <RadioLabel key={name}>
                        <input type="radio" name="fill" checked={fill === name} onChange={() => setFill(name)} />
                        {name}
                    </RadioLabel>
                ))}
            </RadioList>
            <Field $height={34}>颜色<ColorButton aria-label="颜色" /></Field>
            <Percent label="亮度" value={50} text="0 %" />
            <Percent label="透明度" value={100} text="100 %" />
        </Panel>
    )
}

const App = () => (
    <>
        <GlobalStyle />
        <Window>
            <TitleBar>
                <QuickTools>
                    <LogoIcon /><SaveIcon /><PasteIcon /><CutIcon /><CopyIcon /><UndoIcon /><UndoIcon flip />
                    <Svg w={7} h={7}><path d="M0 .5h7" stroke="#000" /><path d="M0 3h7L3.500 7z" fill="#000" /></Svg>
                </QuickTools>
                <ThemePicker><i />Blue (Light)<Caret /></ThemePicker>
                <WindowButtons>
                    <WindowButton aria-label="最小化"><Svg w={11}><path d="M0 5.500h11" stroke="#222" /></Svg></WindowButton>
                    <WindowButton aria-label="最大化"><Svg w={11}><path d="M.5.5h9v9h-9z" stroke="#222" /></Svg></WindowButton>
                    <WindowButton aria-label="关闭"><Svg w={11}><path d="M.5.5l10 10M10.500.5l-10 10" stroke="#222" /></Svg></WindowButton>
                </WindowButtons>
            </TitleBar>
            <TabRow>
                <RibbonTab $file>文件</RibbonTab>
                {MENU.map((name, index) => <RibbonTab key={name} $active={index === 0}>{name}</RibbonTab>)}
                <TabRowEnd>
                    <Svg w={12} h={8}><path d="M1 7l5-5 5 5" stroke="#111" strokeWidth="2" /></Svg>
                    <b>?</b>
                </TabRowEnd>
            </TabRow>
            <RibbonBar />
            <Main>
                <SymbolLibrary />
                <DocumentArea />
                <Rail>
                    <RailButton $height={25} aria-label="展开"><DoubleChevron right /></RailButton>
                    <RailButton $active $height={34} aria-label="填充"><BucketIcon /></RailButton>
                    <RailButton $height={44} aria-label="布局"><GridIcon /></RailButton>
                    <RailButton $height={44} aria-label="图片"><MdImage size={24} /></RailButton>
                    <RailButton $height={44} aria-label="更多"><DotsIcon /></RailButton>
                </Rail>
                <FillPanel />
            </Main>
            <StatusBar>
                <PageTabs>
                    <button>页-1</button>
                    <button aria-label="新建页"><Svg><path d="M8 0v16M0 8h16" stroke="#111" strokeWidth="2.500" /></Svg></button>
                </PageTabs>
                <Info>
                    <InfoPart $width={51}>形状ID：</InfoPart>
                    <InfoPart $width={247}>00000000-0000-0000-0000-000000000000</InfoPart>
                    <InfoPart $width={8}>-</InfoPart>
                    <InfoPart $width={246}>39153ee5-35b6-44ca-980c-ce87da972839</InfoPart>
                    <InfoPart $width={95}>鼠标位置(mm)：</InfoPart>
                    <InfoPart>138.8 , 13</InfoPart>
                </Info>
                <StatusEnd>
                    <i /><span>#FFFFFFFF</span>
                    <MonitorIcon />
                    <output>100.00%</output>
                    <input type="range" aria-label="缩放" defaultValue={5} />
                </StatusEnd>
            </StatusBar>
            <RecorderBar />
            <Watermark>掘金技术社区 @ 追逐时光者</Watermark>
        </Window>
    </>
)

export default App
